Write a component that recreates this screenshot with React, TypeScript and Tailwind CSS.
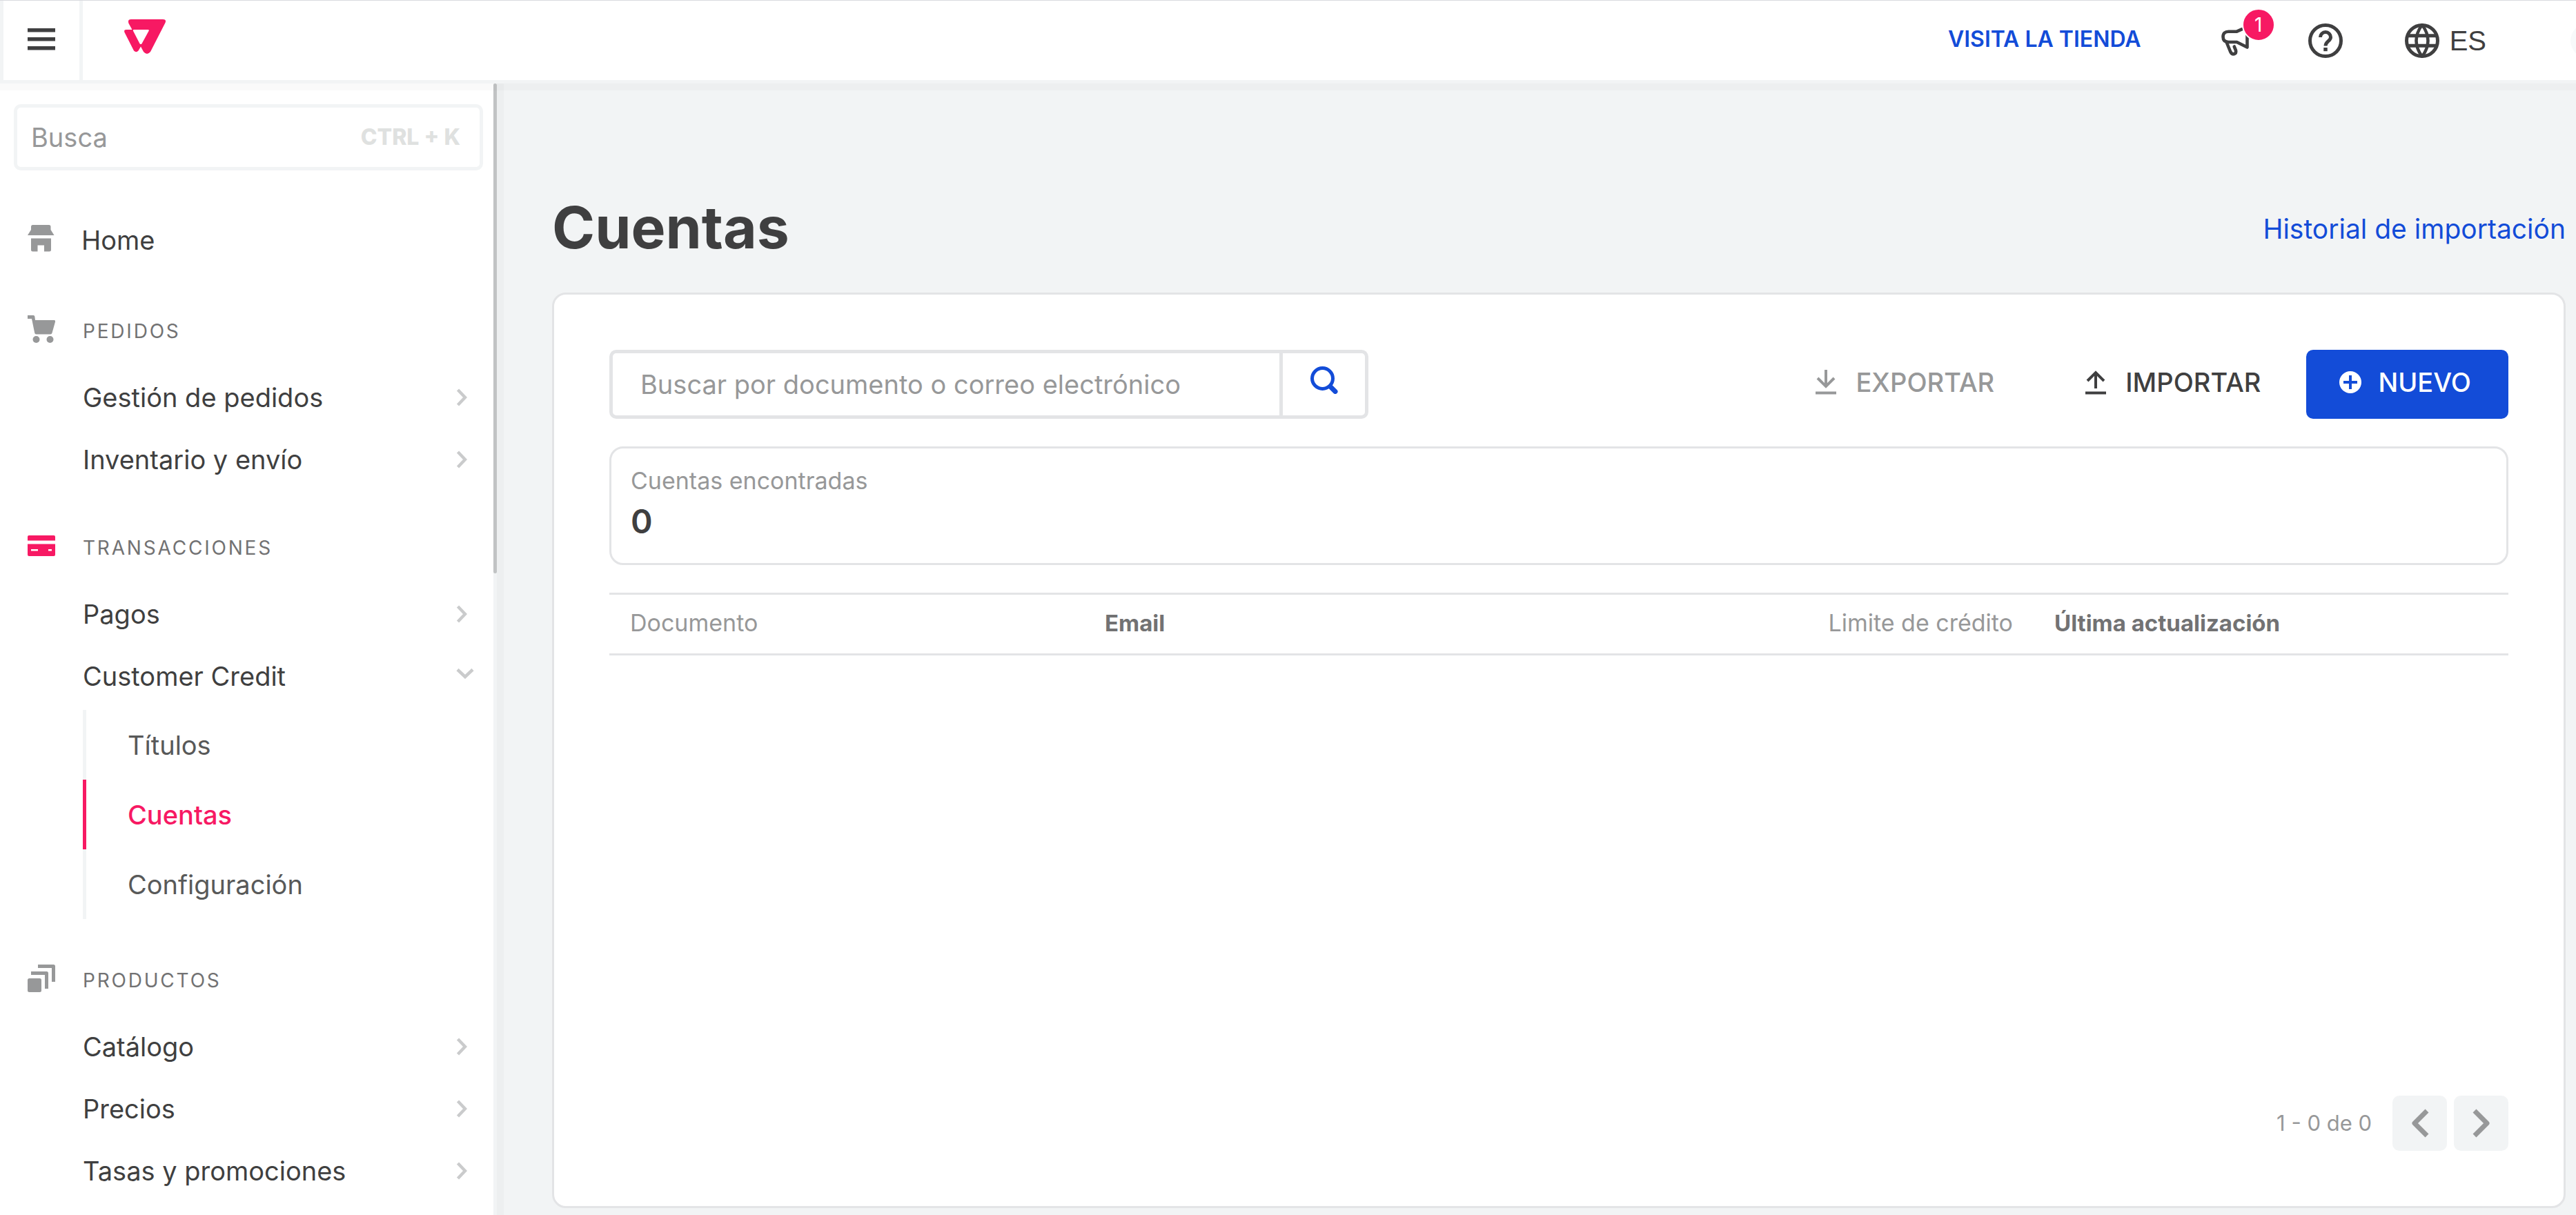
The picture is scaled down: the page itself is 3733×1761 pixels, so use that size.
import type { ReactNode } from "react";

function HomeIcon() {
  return (
    <svg width="40" height="40" viewBox="0 0 40 40" fill="currentColor" aria-hidden="true">
      <path d="M7 0h24q2.500 0 2.500 2.500V7l5 8H0l5-8V2.500Q5 0 7 0Z" />
      <path d="M5 19.500h29V36q0 2.500-2.500 2.500H24V29.500H14.500v9H7.500Q5 38.500 5 36Z" />
    </svg>
  );
}

function CartIcon() {
  return (
    <svg width="40" height="40" viewBox="0 0 40 40" fill="currentColor" aria-hidden="true">
      <path d="M0 0h8.500q1.500 0 1.800 1.500L11 7h27.500q2 0 1.500 2.500l-4.500 16Q35 27.500 33 27.500H12.500q-2 0-2.300-2L6 5H0Z" />
      <circle cx="12.500" cy="35" r="5" />
      <circle cx="32.500" cy="35" r="5" />
    </svg>
  );
}

function CardIcon() {
  return (
    <svg width="40" height="40" viewBox="0 0 40 40" fill="currentColor" aria-hidden="true">
      <path d="M2 5h36q2 0 2 2v5.500H0V7q0-2 2-2Z" />
      <path
        fillRule="evenodd"
        d="M0 17.500h40V33q0 2-2 2H2q-2 0-2-2ZM5 25v2.500h10V25ZM30 25v2.500h5V25Z"
      />
    </svg>
  );
}

function StackIcon() {
  return (
    <svg width="40" height="40" viewBox="0 0 40 40" fill="currentColor" aria-hidden="true">
      <rect x="0" y="20" width="20" height="20" rx="2.500" />
      <path d="M5 10h22.500q2.500 0 2.500 2.500V35h-5V15H5Z" />
      <path d="M15 0h22.500q2.500 0 2.500 2.500V25h-5V5H15Z" />
    </svg>
  );
}

function Logo() {
  return (
    <svg width="60" height="50" viewBox="0 0 60 50" fill="#f71963" aria-hidden="true">
      <path
        fillRule="evenodd"
        d="M10 0H56q5.500 0 3.500 5L38 47q-5 6-10 0L24 39.500 20.500 45.500q-3 3.500-6.500 0L.5 19Q-1 15 3 15h8.500L6.500 6Q4.500 0 10 0ZM14 15q-1.800.3-.8 2.200L22.500 35.200q1.500 1.800 3 0L35.500 17q1-1.800-1-2Z"
      />
    </svg>
  );
}

function MegaphoneIcon() {
  return (
    <svg width="42" height="42" viewBox="0 0 42 42" fill="none" stroke="#3f3f40" strokeWidth="4.600" strokeLinejoin="round" aria-hidden="true">
      <path d="M33 .8 22.500 5.700H10.500Q2.500 5.700 2.500 13.300T10.500 21H22.500L37.500 28.500V10" />
      <path d="M7.500 21 13 34.500q2 4.500 5.500 3.800 3.500-1.300 2.500-5.300l-2.300-5.500" strokeLinecap="round" />
    </svg>
  );
}

function HelpIcon() {
  return (
    <svg width="50" height="50" viewBox="0 0 50 50" fill="none" stroke="#3f3f40" strokeWidth="5" aria-hidden="true">
      <circle cx="25" cy="25" r="22.500" />
      <path d="M17.500 20a7.500 7.500 0 0 1 15 0c0 5.500-7.500 6-7.500 12.500" />
      <path d="M25 35v5.200" strokeWidth="5.500" />
    </svg>
  );
}

function GlobeIcon() {
  return (
    <svg width="50" height="50" viewBox="0 0 50 50" fill="none" stroke="#3f3f40" strokeWidth="5" aria-hidden="true">
      <circle cx="25" cy="25" r="22.500" />
      <path d="M25 2Q8 25 25 48Q42 25 25 2Z" strokeWidth="4.500" />
      <path d="M4 17.700h42M4 32.300h42" />
    </svg>
  );
}

function ChevronRight() {
  return (
    <svg width="16" height="26" viewBox="0 0 16 26" fill="none" stroke="#cacbcc" strokeWidth="4.500" aria-hidden="true">
      <path d="M2.500 2 13 13 2.500 24" />
    </svg>
  );
}

function ChevronDown() {
  return (
    <svg width="26" height="16" viewBox="0 0 26 16" fill="none" stroke="#cacbcc" strokeWidth="4.500" aria-hidden="true">
      <path d="M2 2.500 13 13 24 2.500" />
    </svg>
  );
}

function MenuItem({ label, open }: { label: string; open?: boolean }) {
  return (
    <button
      type="button"
      aria-expanded={!!open}
      className={
        open
          ? "flex h-[90px] w-full items-center justify-between pl-[120px] pr-7 text-left"
          : "flex h-[90px] w-full items-center justify-between pl-[120px] pr-[38px] text-left"
      }
    >
      {label}
      {open ? (
        <span className="pb-2">
          <ChevronDown />
        </span>
      ) : (
        <ChevronRight />
      )}
    </button>
  );
}

function Section({ icon, title, active, children }: { icon: ReactNode; title: string; active?: boolean; children: ReactNode }) {
  return (
    <section className="mt-8">
      <h2 className="flex h-[102px] items-center gap-10 pl-10 text-[28px] tracking-widest text-[#727273]">
        <span className={active ? "pb-1.5 text-[#f71963]" : "pb-1.5 text-[#979899]"}>{icon}</span>
        {title}
      </h2>
      {children}
    </section>
  );
}

function Header() {
  return (
    <header className="relative z-20 shrink-0 border-b-[5px] border-t border-[#f2f4f5] border-t-[#d9dadf] bg-white shadow-[0_10px_0_rgba(0,0,0,0.02)]">
      <div className="flex h-[115px] items-center overflow-hidden">
        <button
          type="button"
          aria-label="Menú"
          className="flex h-full w-[120px] items-center justify-center border-x-[5px] border-[#f2f4f5] pb-1"
        >
          <svg width="40" height="32" viewBox="0 0 40 32" fill="#3f3f40" aria-hidden="true">
            <path d="M0 0h40v5.500H0ZM0 13h40v5.500H0ZM0 26h40v5.500H0Z" />
          </svg>
        </button>
        <a href="#inicio" aria-label="Inicio" className="ml-[60px] pb-3">
          <Logo />
        </a>
        <div className="-mr-[42px] ml-auto flex items-center">
          <a href="#tienda" className="mr-[116px] pb-1 text-[32px] font-semibold text-[#134cd8]">
            VISITA LA TIENDA
          </a>
          <button type="button" aria-label="Novedades" className="relative mr-[84px] pt-1">
            <MegaphoneIcon />
            <span className="absolute -top-6 left-[30px] flex size-12 items-center justify-center rounded-full border-2 border-white bg-[#f71963] text-[28px] text-white">
              1
            </span>
          </button>
          <button type="button" aria-label="Ayuda" className="mr-[90px]">
            <HelpIcon />
          </button>
          <button type="button" className="mr-[122px] flex items-center gap-[15px] font-['Liberation_Sans',sans-serif] text-[40px]">
            <GlobeIcon />
            ES
          </button>
          <span className="size-[50px] rounded-full bg-[#f7f9fa]" />
        </div>
      </div>
    </header>
  );
}

function Sidebar() {
  return (
    <nav className="relative z-10 w-[720px] shrink-0 border-r-[5px] border-[#f2f4f5] bg-white pt-[30px] shadow-[10px_0_0_rgba(0,0,0,0.02)]">
      <label className="ml-5 mr-[15px] flex h-24 items-center rounded-[10px] border-[5px] border-[#f2f4f5] pl-5 pr-7">
        <input
          type="text"
          placeholder="Busca"
          aria-label="Busca"
          className="min-w-0 flex-1 bg-transparent outline-none placeholder:text-[#979899]"
        />
        <kbd className="font-['Inter',sans-serif] text-[32px] font-extrabold text-[#dfe1e0]">CTRL + K</kbd>
      </label>

      <a href="#home" className="mb-9 mt-14 flex h-[90px] items-center gap-[38px] pl-10">
        <span className="pb-1 text-[#979899]">
          <HomeIcon />
        </span>
        Home
      </a>

      <Section icon={<CartIcon />} title="PEDIDOS">
        <MenuItem label="Gestión de pedidos" />
        <MenuItem label="Inventario y envío" />
      </Section>

      <Section icon={<CardIcon />} title="TRANSACCIONES" active>
        <MenuItem label="Pagos" />
        <MenuItem label="Customer Credit" open />
        <ul className="ml-[120px] pb-1.5 pt-1 text-[#585959]">
          <li>
            <a href="#titulos" className="flex h-[101px] items-center border-l-[5px] border-[#f2f4f5] pl-[60px]">
              Títulos
            </a>
          </li>
          <li>
            <a
              href="#cuentas"
              aria-current="page"
              className="flex h-[101px] items-center border-l-[5px] border-[#f71963] pl-[60px] font-medium text-[#f71963]"
            >
              Cuentas
            </a>
          </li>
          <li>
            <a href="#configuracion" className="flex h-[101px] items-center border-l-[5px] border-[#f2f4f5] pl-[60px]">
              Configuración
            </a>
          </li>
        </ul>
      </Section>

      <Section icon={<StackIcon />} title="PRODUCTOS">
        <MenuItem label="Catálogo" />
        <MenuItem label="Precios" />
        <MenuItem label="Tasas y promociones" />
      </Section>

      <div className="absolute -right-[5px] top-0 h-[710px] w-[5px] rounded-full bg-[#c1c3c4]" />
    </nav>
  );
}

function Toolbar() {
  return (
    <div className="flex h-[100px] items-stretch justify-between">
      <form className="flex w-[1100px] rounded-[10px] border-[5px] border-[#e3e4e6]">
        <input
          type="search"
          placeholder="Buscar por documento o correo electrónico"
          aria-label="Buscar por documento o correo electrónico"
          className="min-w-0 flex-1 bg-transparent px-10 outline-none placeholder:text-[#979899]"
        />
        <button
          type="button"
          aria-label="Buscar"
          className="flex w-[124px] items-center justify-center border-l-[5px] border-[#e3e4e6] pb-3"
        >
          <svg width="40" height="40" viewBox="0 0 40 40" fill="none" stroke="#134cd8" aria-hidden="true">
            <circle cx="17.500" cy="17.500" r="15" strokeWidth="5" />
            <path d="M29.500 30 36 36.500" strokeWidth="7" strokeLinecap="round" />
          </svg>
        </button>
      </form>
      <div className="flex items-stretch font-medium">
        <button type="button" className="flex items-center gap-7 px-[66px] pb-1.5 text-[#979899]">
          <svg width="30" height="36" viewBox="0 0 30 36" fill="none" stroke="currentColor" strokeWidth="4" aria-hidden="true">
            <path d="M15 0v23M3 12l12 12 12-12M0 33.500h30" />
          </svg>
          EXPORTAR
        </button>
        <button type="button" className="flex items-center gap-7 px-[66px] pb-1.5">
          <svg width="30" height="36" viewBox="0 0 30 36" fill="none" stroke="currentColor" strokeWidth="4" aria-hidden="true">
            <path d="M15 27V5M3 16 15 4l12 12M0 33.500h30" />
          </svg>
          IMPORTAR
        </button>
        <button type="button" className="flex items-center gap-6 rounded-[10px] bg-[#134cd8] pb-1.5 pl-12 pr-[54px] text-white">
          <svg width="32" height="32" viewBox="0 0 32 32" aria-hidden="true">
            <circle cx="16" cy="16" r="16" fill="#fff" />
            <path d="M16 6v20M6 16h20" stroke="#134cd8" strokeWidth="4" />
          </svg>
          NUEVO
        </button>
      </div>
    </div>
  );
}

export default function App() {
  return (
    <div className="flex h-screen flex-col overflow-hidden bg-[#f2f4f5] font-['Inter',sans-serif] text-[38px] leading-[48px] text-[#3f3f40]">
      <Header />
      <div className="flex min-h-0 flex-1">
        <Sidebar />
        <main className="flex min-w-0 flex-1 flex-col pb-[10px] pl-20 pr-[15px] pt-[159px]">
          <div className="mb-11 flex items-center justify-between">
            <h1 className="text-[84px] font-bold leading-[100px]">Cuentas</h1>
            <a href="#historial" className="pt-1 text-[39px] text-[#134cd8]">
              Historial de importación
            </a>
          </div>

          <div className="flex flex-1 flex-col rounded-[20px] border-[3px] border-[#e3e4e6] bg-white p-20">
            <Toolbar />

            <div className="mt-10 rounded-[20px] border-[3px] border-[#e3e4e6] px-7 pb-[27px] pt-[22px]">
              <p className="text-[34px] leading-[50px] text-[#979899]">Cuentas encontradas</p>
              <p className="text-[48px] font-semibold leading-[67px]">0</p>
            </div>

            <table className="mt-10 w-full table-fixed text-[34px]">
              <thead>
                <tr className="h-[88px] border-y-[3px] border-[#e3e4e6] text-left text-[#979899]">
                  <th className="px-[30px] pb-1 font-normal">Documento</th>
                  <th className="px-[30px] pb-1 text-[33px] font-bold text-[#727273]">Email</th>
                  <th className="px-[30px] pb-1 text-right font-normal">Limite de crédito</th>
                  <th className="px-[30px] pb-1 text-[33px] font-bold text-[#727273]">Última actualización</th>
                </tr>
              </thead>
            </table>

            <div className="mt-auto flex items-center justify-end gap-[10px] text-[#979899]">
              <span className="mr-5 text-[31px]">1 - 0 de 0</span>
              <button type="button" aria-label="Anterior" className="flex h-20 w-[79px] items-center justify-center rounded-[10px] bg-[#f2f4f5]">
                <svg width="28" height="42" viewBox="0 0 28 42" fill="none" stroke="currentColor" strokeWidth="7" aria-hidden="true">
                  <path d="M24 3 6 21l18 18" strokeLinejoin="round" />
                </svg>
              </button>
              <button type="button" aria-label="Siguiente" className="flex h-20 w-[79px] items-center justify-center rounded-[10px] bg-[#f2f4f5]">
                <svg width="28" height="42" viewBox="0 0 28 42" fill="none" stroke="currentColor" strokeWidth="7" aria-hidden="true">
                  <path d="M4 3l18 18L4 39" strokeLinejoin="round" />
                </svg>
              </button>
            </div>
          </div>
        </main>
      </div>
    </div>
  );
}
